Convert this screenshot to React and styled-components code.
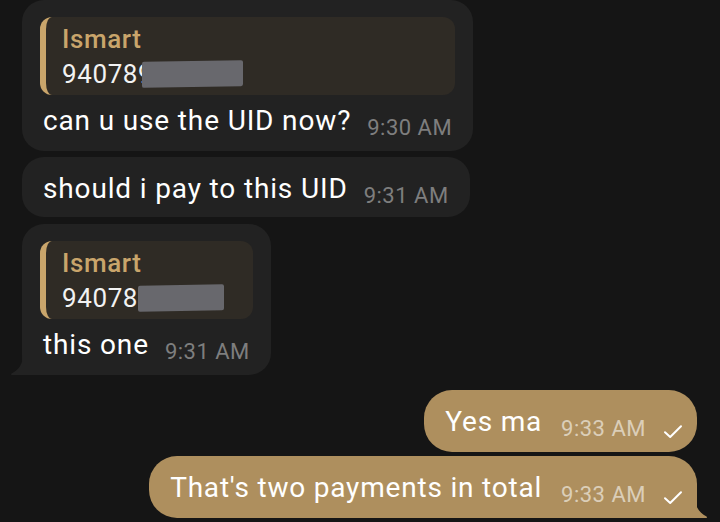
import React from "react";
import styled, { createGlobalStyle, css } from "styled-components";

const GlobalStyle = createGlobalStyle`
  html, body {
    margin: 0;
    padding: 0;
    background: #151515;
  }
  body {
    font-family: Roboto, "Noto Sans", sans-serif;
    -webkit-font-smoothing: antialiased;
  }
`;

const Chat = styled.div`
  width: 720px;
  height: 522px;
  overflow: hidden;
  display: flex;
  flex-direction: column;
  background: #151515;
`;

const Bubble = styled.div`
  position: relative;
  display: flex;
  flex-direction: column;
  padding: ${(p) => (p.$reply ? "17px 18px 13px" : "15px 18px 11px")};
  margin-top: ${(p) => p.$gap || 0}px;
  border-radius: 22px;
  ${(p) =>
    p.$out
      ? css`
          align-self: flex-end;
          margin-right: 23px;
          background: #ae8f5e;
          padding: 15px 14px 13px 21px;
          border-radius: 28px;
        `
      : css`
          align-self: flex-start;
          margin-left: 22px;
          background: #222222;
        `}
  ${(p) =>
    p.$tail &&
    (p.$out
      ? css`
          border-bottom-right-radius: 0;
        `
      : css`
          border-bottom-left-radius: 0;
        `)}
`;

const Tail = styled.svg`
  position: absolute;
  bottom: 0;
  width: 13px;
  height: 20px;
  ${(p) => (p.$out ? "right: -11px;" : "left: -12px;")}
`;

const Reply = styled.div`
  display: flex;
  flex-direction: column;
  background: #2f2b25;
  border-left: 6px solid #c9a56b;
  border-radius: 12px;
  padding: 7px 16px 6px 16px;
  margin-bottom: 9px;
`;

const ReplyName = styled.div`
  color: #c9a56b;
  font-weight: 500;
  font-size: 26px;
  line-height: 30px;
  letter-spacing: 0.6px;
`;

const ReplyText = styled.div`
  display: flex;
  align-items: center;
  color: #f2f2f2;
  font-size: 26px;
  line-height: 30px;
  margin-top: 5px;
  letter-spacing: 0.6px;
`;

const Redact = styled.span`
  display: inline-block;
  width: ${(p) => p.$w}px;
  height: 26px;
  margin-left: ${(p) => p.$shift}px;
  background: #68686d;
  border-radius: 2px;
  transform: skewY(-1deg);
`;

const Row = styled.div`
  display: flex;
  align-items: flex-end;
  padding: ${(p) => (p.$out ? "0" : "0 3px")};
`;

const Text = styled.span`
  color: #ffffff;
  font-size: 28px;
  line-height: 34px;
  letter-spacing: ${(p) => (p.$out ? 0.8 : 0.85)}px;
  white-space: nowrap;
`;

const Time = styled.span`
  margin-left: ${(p) => p.$gap || 16}px;
  color: ${(p) => (p.$out ? "rgba(255,255,255,0.58)" : "#7e7e7e")};
  font-size: 22px;
  line-height: 20px;
  letter-spacing: 0.5px;
  white-space: nowrap;
`;

const Check = styled.svg`
  width: 20px;
  height: 15px;
  margin-left: 17px;
`;

const Tick = () => (
  <Check viewBox="0 0 20 15">
    <path d="M2 8.2 L7.2 13 L18 2.2" fill="none" stroke="#ffffff" strokeWidth="2" strokeLinecap="round" strokeLinejoin="round" />
  </Check>
);

const TailShape = ({ out, color }) => (
  <Tail $out={out} viewBox="0 0 13 20">
    {out ? (
      <path d="M0 0 C0 8 4 15 11.5 18.4 Q13 19.4 11 20 L0 20 Z" fill={color} />
    ) : (
      <path d="M13 0 C13 8 9 15 1.5 18.4 Q0 19.4 2 20 L13 20 Z" fill={color} />
    )}
  </Tail>
);

const messages = [
  { id: 1, reply: { name: "Ismart", num: "940789", w: 101, shift: -11 }, text: "can u use the UID now?", time: "9:30 AM", gap: 0 },
  { id: 2, text: "should i pay to this UID", time: "9:31 AM", gap: 6 },
  { id: 3, reply: { name: "Ismart", num: "94078", w: 86, shift: 0 }, text: "this one", time: "9:31 AM", gap: 7, tail: true },
  { id: 4, out: true, text: "Yes ma", time: "9:33 AM", gap: 15, timeGap: 19 },
  { id: 5, out: true, text: "That's two payments in total", time: "9:33 AM", gap: 4, tail: true, timeGap: 19 },
];

export default function App() {
  return (
    <>
      <GlobalStyle />
      <Chat>
        {messages.map((m) => (
          <Bubble key={m.id} $out={m.out} $reply={!!m.reply} $gap={m.gap} $tail={m.tail}>
            {m.reply && (
              <Reply>
                <ReplyName>{m.reply.name}</ReplyName>
                <ReplyText>
                  {m.reply.num}
                  <Redact $w={m.reply.w} $shift={m.reply.shift} />
                </ReplyText>
              </Reply>
            )}
            <Row $out={m.out}>
              <Text $out={m.out}>{m.text}</Text>
              <Time $out={m.out} $gap={m.timeGap}>{m.time}</Time>
              {m.out && <Tick />}
            </Row>
            {m.tail && <TailShape out={m.out} color={m.out ? "#ae8f5e" : "#222222"} />}
          </Bubble>
        ))}
      </Chat>
    </>
  );
}
